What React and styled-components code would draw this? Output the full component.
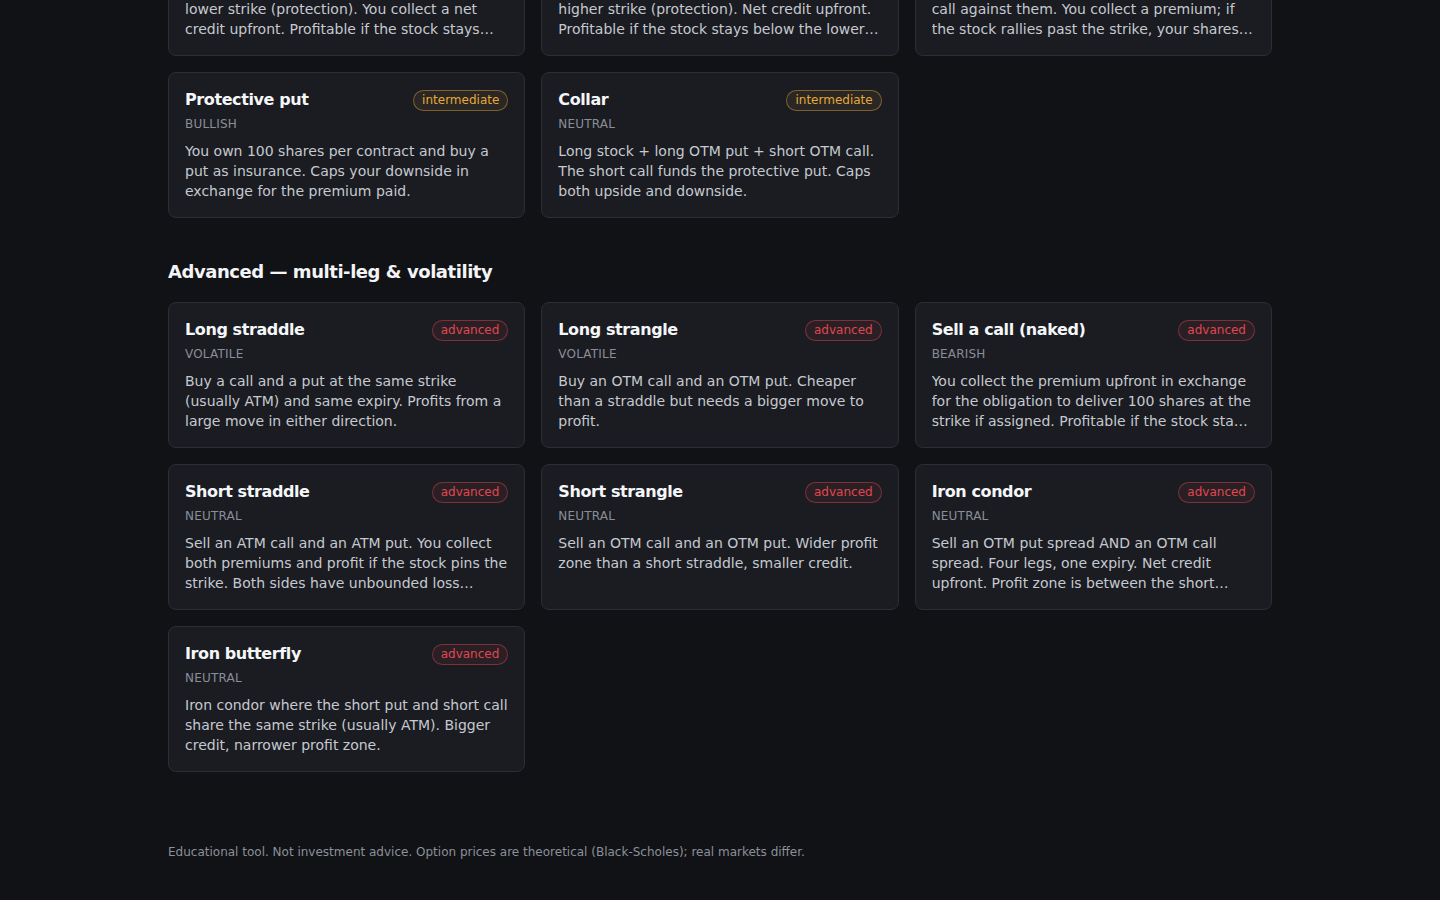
import React from 'react';
import styled, { createGlobalStyle, css } from 'styled-components';

const GlobalStyle = createGlobalStyle`
  html, body {
    margin: 0;
    padding: 0;
    background: #111216;
    font-family: 'DejaVu Sans', 'Noto Sans', sans-serif;
    -webkit-font-smoothing: antialiased;
  }
`;

// the screenshot is taken scrolled down a bit, so the top row is cut off
const Page = styled.main`
  max-width: 1104px;
  margin: -90px auto 0;
  padding-bottom: 40px;
`;

const Section = styled.section`
  & + & {
    margin-top: 40px;
  }
`;

const SectionTitle = styled.h2`
  margin: 0 0 16px;
  font-size: 18px;
  line-height: 28px;
  font-weight: 700;
  letter-spacing: -0.025em;
  color: #f3f4f6;
`;

const Grid = styled.div`
  display: grid;
  grid-template-columns: repeat(3, 1fr);
  gap: 16px;
`;

const Card = styled.article`
  background: #1a1c22;
  border: 1px solid #2b2e36;
  border-radius: 8px;
  padding: 16px;
  min-height: 112px;
`;

const CardHead = styled.div`
  display: flex;
  align-items: center;
  justify-content: space-between;
  gap: 8px;
  height: 22px;
`;

const CardTitle = styled.h3`
  margin: 0;
  font-size: 16px;
  line-height: 22px;
  font-weight: 700;
  letter-spacing: -0.025em;
  color: #f5f6f8;
`;

const badgeTones = {
  intermediate: css`
    color: #e6a93a;
    border-color: rgba(230, 169, 58, 0.45);
    background: rgba(230, 169, 58, 0.08);
  `,
  advanced: css`
    color: #e0474f;
    border-color: rgba(224, 71, 79, 0.45);
    background: rgba(224, 71, 79, 0.08);
  `,
};

const Badge = styled.span`
  flex-shrink: 0;
  font-size: 12px;
  line-height: 17px;
  padding: 1px 8px;
  border: 1px solid;
  border-radius: 999px;
  ${(p) => badgeTones[p.$level]}
`;

const Bias = styled.div`
  margin-top: 4px;
  font-size: 12px;
  line-height: 18px;
  letter-spacing: 0.2px;
  text-transform: uppercase;
  color: #8a8e97;
`;

const Desc = styled.p`
  margin: 8px 0 0;
  font-size: 14px;
  line-height: 20px;
  color: #c6c9cf;
  display: -webkit-box;
  -webkit-box-orient: vertical;
  -webkit-line-clamp: 3;
  overflow: hidden;
`;

const Footer = styled.footer`
  margin-top: 72px;
  font-size: 12px;
  line-height: 16px;
  color: #8b9099;
`;

const intermediate = [
  {
    name: 'Bull put spread',
    bias: 'bullish',
    text: 'Sell a put at a higher strike and buy one at a lower strike (protection). You collect a net credit upfront. Profitable if the stock stays above the short strike at expiry.',
  },
  {
    name: 'Bear call spread',
    bias: 'bearish',
    text: 'Sell a call at a lower strike and buy one at a higher strike (protection). Net credit upfront. Profitable if the stock stays below the lower strike at expiry.',
  },
  {
    name: 'Covered call',
    bias: 'neutral',
    text: 'You own 100 shares per contract and sell a call against them. You collect a premium; if the stock rallies past the strike, your shares get called away.',
  },
  {
    name: 'Protective put',
    bias: 'bullish',
    text: 'You own 100 shares per contract and buy a put as insurance. Caps your downside in exchange for the premium paid.',
  },
  {
    name: 'Collar',
    bias: 'neutral',
    text: 'Long stock + long OTM put + short OTM call. The short call funds the protective put. Caps both upside and downside.',
  },
];

const advanced = [
  {
    name: 'Long straddle',
    bias: 'volatile',
    text: 'Buy a call and a put at the same strike (usually ATM) and same expiry. Profits from a large move in either direction.',
  },
  {
    name: 'Long strangle',
    bias: 'volatile',
    text: 'Buy an OTM call and an OTM put. Cheaper than a straddle but needs a bigger move to profit.',
  },
  {
    name: 'Sell a call (naked)',
    bias: 'bearish',
    text: 'You collect the premium upfront in exchange for the obligation to deliver 100 shares at the strike if assigned. Profitable if the stock stays below the strike; losses are unlimited.',
  },
  {
    name: 'Short straddle',
    bias: 'neutral',
    text: 'Sell an ATM call and an ATM put. You collect both premiums and profit if the stock pins the strike. Both sides have unbounded loss potential.',
  },
  {
    name: 'Short strangle',
    bias: 'neutral',
    text: 'Sell an OTM call and an OTM put. Wider profit zone than a short straddle, smaller credit.',
  },
  {
    name: 'Iron condor',
    bias: 'neutral',
    text: 'Sell an OTM put spread AND an OTM call spread. Four legs, one expiry. Net credit upfront. Profit zone is between the short strikes.',
  },
  {
    name: 'Iron butterfly',
    bias: 'neutral',
    text: 'Iron condor where the short put and short call share the same strike (usually ATM). Bigger credit, narrower profit zone.',
  },
];

function StrategyCard({ item, level }) {
  return (
    <Card>
      <CardHead>
        <CardTitle>{item.name}</CardTitle>
        <Badge $level={level}>{level}</Badge>
      </CardHead>
      <Bias>{item.bias}</Bias>
      <Desc>{item.text}</Desc>
    </Card>
  );
}

export default function App() {
  return (
    <>
      <GlobalStyle />
      <Page>
        <Section>
          <Grid>
            {intermediate.map((item) => (
              <StrategyCard key={item.name} item={item} level="intermediate" />
            ))}
          </Grid>
        </Section>
        <Section>
          <SectionTitle>Advanced — multi-leg &amp; volatility</SectionTitle>
          <Grid>
            {advanced.map((item) => (
              <StrategyCard key={item.name} item={item} level="advanced" />
            ))}
          </Grid>
        </Section>
        <Footer>
          Educational tool. Not investment advice. Option prices are theoretical
          (Black-Scholes); real markets differ.
        </Footer>
      </Page>
    </>
  );
}
